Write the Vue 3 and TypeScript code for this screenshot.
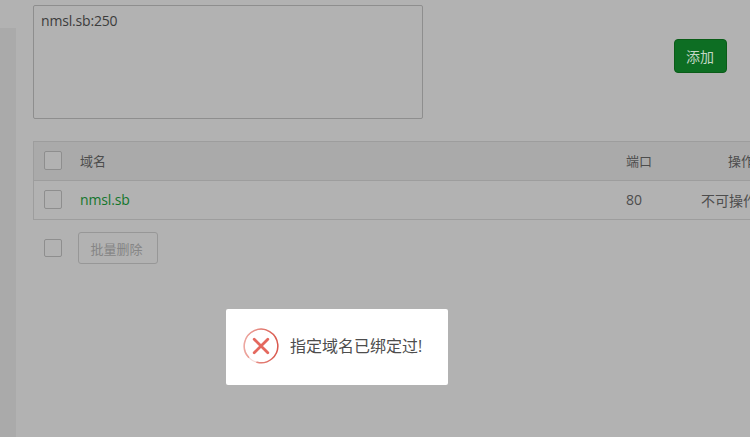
<script setup lang="ts">
const rows = [{ name: 'nmsl.sb', port: 80, action: '不可操作' }]
</script>

<template>
  <div class="page">
    <aside class="side"></aside>
    <main class="main">
      <section class="add">
        <div class="area">nmsl.sb:250</div>
        <button class="btn-add">添加</button>
      </section>
      <section class="table">
        <div class="row head">
          <span class="check tall"></span>
          <span class="name">域名</span>
          <span class="port">端口</span>
          <span class="op">操作</span>
        </div>
        <div v-for="r in rows" :key="r.name" class="row">
          <span class="check tall"></span>
          <span class="name link">{{ r.name }}</span>
          <span class="port">{{ r.port }}</span>
          <span class="op">{{ r.action }}</span>
        </div>
      </section>
      <section class="batch">
        <span class="check"></span>
        <button class="btn-del">批量删除</button>
      </section>
    </main>
    <div class="toast">
      <svg class="icon" width="36" height="36" viewBox="0 0 36 36" fill="none">
        <defs>
          <linearGradient id="ring" x1="0" y1="0.5" x2="1" y2="0.5">
            <stop offset="0" stop-color="#eda7a0" />
            <stop offset="1" stop-color="#d9584d" />
          </linearGradient>
        </defs>
        <circle cx="18" cy="18" r="16.8" stroke="#f6dcd9" stroke-width="1.3" />
        <path d="M5.6 29.3A16.8 16.8 0 1 1 14 34.3" stroke="url(#ring)" stroke-width="1.5" stroke-linecap="round" />
        <path d="M11.2 11.2 24.8 24.8M24.8 11.2 11.2 24.8" stroke="#e4685e" stroke-width="2.8" stroke-linecap="round" />
      </svg>
      <span class="msg">指定域名已绑定过!</span>
    </div>
  </div>
</template>

<style scoped>
.page {
  position: relative;
  display: flex;
  width: 750px;
  height: 437px;
  overflow: hidden;
  background: #b2b2b2;
  color: #4d4d4d;
  font-family: "Open Sans", "Noto Sans CJK SC", sans-serif;
  font-size: 14px;
}
.side {
  flex: none;
  width: 16px;
  margin-top: 28px;
  background: #aaaaaa;
}
.main {
  flex: none;
  width: 734px;
  padding: 5px 0 0 17px;
  box-sizing: border-box;
}
.add {
  display: flex;
  align-items: flex-start;
  height: 136px;
}
.area {
  box-sizing: border-box;
  width: 390px;
  height: 114px;
  padding: 5px 7px;
  border: 1px solid #8e8e8e;
  border-radius: 2px;
  color: #3c3c3c;
  letter-spacing: -0.18px;
  line-height: 20px;
}
.btn-add {
  box-sizing: border-box;
  width: 53px;
  height: 34px;
  margin: 34px 0 0 251px;
  padding: 0 1px 0 0;
  border: 1px solid #0a5c18;
  border-radius: 4px;
  background: #0d6e23;
  color: #c2d6c6;
  font: inherit;
  font-size: 14px;
}
.table {
  box-sizing: border-box;
  width: 740px;
  border: 1px solid #9d9d9d;
  border-right: 0;
}
.row {
  box-sizing: border-box;
  display: flex;
  align-items: center;
  height: 39px;
  padding: 0 0 1px 10px;
  white-space: nowrap;
}
.row + .row {
  border-top: 1px solid #9d9d9d;
}
.head {
  height: 38px;
  background: #aaaaaa;
  font-size: 13px;
}
.check {
  flex: none;
  box-sizing: border-box;
  width: 18px;
  height: 18px;
  border: 1px solid #8e8e8e;
  border-radius: 2px;
  background: #b2b2b2;
}
.tall {
  height: 19px;
}
.name {
  flex: none;
  width: 546px;
  margin-left: 18px;
}
.link {
  color: #14762c;
  letter-spacing: -0.15px;
}
.port {
  flex: none;
  width: 75px;
}
.op {
  flex: none;
}
.head .op {
  margin-left: 27px;
}
.batch {
  display: flex;
  align-items: center;
  height: 32px;
  margin-top: 12px;
  padding-left: 11px;
}
.btn-del {
  box-sizing: border-box;
  width: 80px;
  height: 32px;
  margin-left: 16px;
  padding: 0 3px 0 0;
  border: 1px solid #979797;
  border-radius: 3px;
  background: transparent;
  color: #858585;
  font: inherit;
  font-size: 13px;
}
.toast {
  position: absolute;
  left: 226px;
  top: 309px;
  box-sizing: border-box;
  display: flex;
  align-items: center;
  gap: 11.5px;
  width: 221.5px;
  height: 75.5px;
  padding: 0 0 1.5px 16.5px;
  border-radius: 2px;
  background: #ffffff;
}
.icon {
  flex: none;
}
.msg {
  color: #4d4d4d;
  font-size: 16px;
  white-space: nowrap;
  line-height: 20px;
}
</style>
